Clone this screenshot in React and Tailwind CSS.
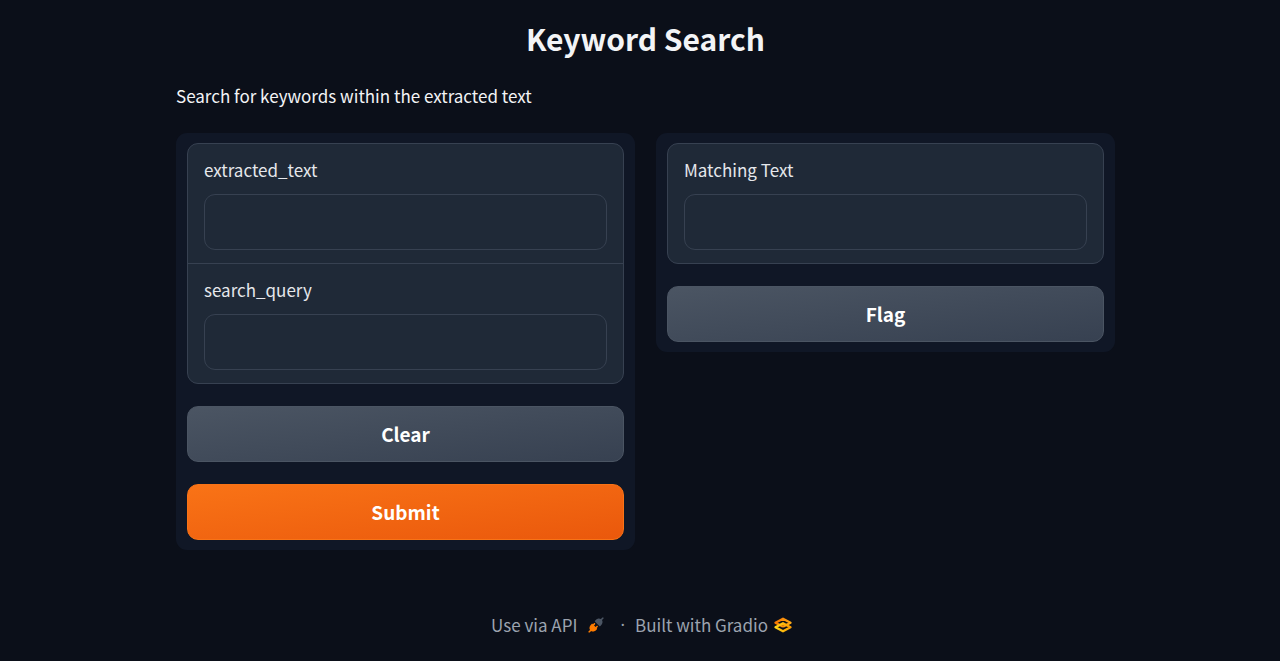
import React from 'react';

function Field({ id, label, readOnly }) {
  return (
    <div className="flex flex-col gap-[9px] px-4 pt-[11px] pb-[13px]">
      <label htmlFor={id} className="self-start text-[17px] leading-[30px] text-[#e5e7eb]">
        {label}
      </label>
      <input
        id={id}
        type="text"
        readOnly={readOnly}
        className="h-14 w-full rounded-[11px] border border-[#374151] bg-[#1f2937] px-3 text-[17px] text-[#f3f4f6] outline-none"
      />
    </div>
  );
}

function Card({ children }) {
  return (
    <div className="divide-y divide-[#374151] overflow-hidden rounded-[11px] border border-[#374151] bg-[#1f2937]">
      {children}
    </div>
  );
}

function Panel({ children }) {
  return (
    <section className="flex min-w-0 flex-col gap-[22px] rounded-[11px] bg-[#101726] px-[11px] py-2.5">
      {children}
    </section>
  );
}

function Button({ primary, children }) {
  const tone = primary
    ? 'border-[#f97316] from-[#f97316] to-[#ea580c]'
    : 'border-[#4b5563] from-[#4b5563] to-[#374151]';
  return (
    <button
      type="button"
      className={`h-14 w-full rounded-[11px] border bg-linear-to-br text-[19px] font-bold text-white ${tone}`}
    >
      {children}
    </button>
  );
}

function PlugIcon() {
  return (
    <svg viewBox="0 0 28 28" className="h-4 w-4" fill="none" aria-hidden="true">
      <path
        fill="#4b5563"
        d="M26.9425 2.94265C27.4632 2.42195 27.4632 1.57773 26.9425 1.05703C26.4218 0.536329 25.5776 0.536329 25.0569 1.05703L22.5713 3.54256C21.1213 2.59333 19.5367 2.43378 18.1753 2.64006C16.5495 2.88638 15.1127 3.66838 14.3905 4.39053L12.3905 6.39053C12.1405 6.64058 12 6.97972 12 7.33334C12 7.68697 12.1405 8.0261 12.3905 8.27615L19.7239 15.6095C20.2446 16.1302 21.0888 16.1302 21.6095 15.6095L23.6095 13.6095C24.3316 12.8873 25.1136 11.4505 25.36 9.82475C25.5663 8.46312 25.4066 6.87827 24.4571 5.42807L26.9425 2.94265Z"
      />
      <path
        fill="#ff7c00"
        d="M12.276 12.9426C12.7967 12.4219 12.7967 11.5777 12.276 11.057C11.7553 10.5363 10.9111 10.5363 10.3904 11.057L8.66651 12.7809L8.27615 12.3905C8.0261 12.1405 7.68697 12 7.33334 12C6.97972 12 6.64058 12.1405 6.39053 12.3905L4.39053 14.3905C3.66838 15.1127 2.88638 16.5495 2.64006 18.1753C2.43377 19.5367 2.59333 21.1214 3.54262 22.5714L1.05703 25.057C0.536329 25.5777 0.536329 26.4219 1.05703 26.9426C1.57773 27.4633 2.42195 27.4633 2.94265 26.9426L5.42817 24.4571C6.87835 25.4066 8.46315 25.5663 9.82475 25.36C11.4505 25.1136 12.8873 24.3316 13.6095 23.6095L15.6095 21.6095C16.1302 21.0888 16.1302 20.2446 15.6095 19.7239L15.2188 19.3332L16.9426 17.6093C17.4633 17.0886 17.4633 16.2444 16.9426 15.7237C16.4219 15.203 15.5777 15.203 15.057 15.7237L13.3332 17.4475L10.5521 14.6665L12.276 12.9426Z"
      />
    </svg>
  );
}

function GradioIcon() {
  return (
    <svg viewBox="0 0 36 32" className="h-4 w-[18px]" fill="none" aria-hidden="true">
      <defs>
        <linearGradient id="gradio-top" x1="2" y1="10" x2="34" y2="20" gradientUnits="userSpaceOnUse">
          <stop stopColor="#f97700" />
          <stop offset="1" stopColor="#ffb01a" />
        </linearGradient>
        <linearGradient id="gradio-bottom" x1="2" y1="20" x2="34" y2="20" gradientUnits="userSpaceOnUse">
          <stop stopColor="#ffd91a" />
          <stop offset="1" stopColor="#fb9a00" />
        </linearGradient>
      </defs>
      <path
        d="M18 19.5 L3 11.5 L18 3.5 L33 11.5 L18 19.5"
        stroke="url(#gradio-top)"
        strokeWidth="4.6"
        strokeLinejoin="round"
      />
      <path
        d="M3 20.5 L18 12.5 L33 20.5 L18 28.5 Z"
        stroke="url(#gradio-bottom)"
        strokeWidth="4.6"
        strokeLinejoin="round"
      />
    </svg>
  );
}

export default function App() {
  return (
    <div className="min-h-screen bg-[#0b0f19] pr-4 pl-[27px] font-['Noto_Sans_CJK_SC','Noto_Sans',sans-serif] text-[#f3f4f6]">
      <div className="mx-auto w-full max-w-[939px]">
        <main className="pt-[17px]">
          <h1 className="text-center text-[30px] leading-[42px] font-bold">Keyword Search</h1>
          <p className="mt-[22px] text-[17px] leading-[30px]">
            Search for keywords within the extracted text
          </p>
          <div className="mt-[22px] grid items-start gap-[21px] md:grid-cols-2">
            <Panel>
              <Card>
                <Field id="extracted-text" label="extracted_text" />
                <Field id="search-query" label="search_query" />
              </Card>
              <Button>Clear</Button>
              <Button primary>Submit</Button>
            </Panel>
            <Panel>
              <Card>
                <Field id="matching-text" label="Matching Text" readOnly />
              </Card>
              <Button>Flag</Button>
            </Panel>
          </div>
        </main>
        <footer className="mt-[60px] flex items-center justify-center pr-2 pb-5 text-[17px] leading-[30px] text-[#9ca3af]">
          <a href="#api" className="flex items-center gap-[11px]">
            Use via API
            <PlugIcon />
          </a>
          <span className="mr-2.5 ml-4 font-['Noto_Sans']">·</span>
          <a href="#gradio" className="flex items-center gap-1.5">
            Built with Gradio
            <GradioIcon />
          </a>
        </footer>
      </div>
    </div>
  );
}
